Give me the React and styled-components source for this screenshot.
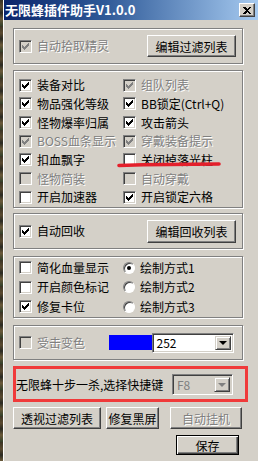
import React from 'react';
import styled, {createGlobalStyle, css} from 'styled-components';

const GlobalStyle = createGlobalStyle`
  html, body {
    margin: 0;
    padding: 0;
    width: 258px;
    height: 461px;
    overflow: hidden;
    background: repeating-linear-gradient(180deg, #3b3424 0px, #5a4a30 7px, #2a2a22 13px, #6b5a3a 19px, #33402a 26px);
    font-family: "Noto Sans CJK SC", "Noto Sans", sans-serif;
    font-size: 12px;
  }
`;

const Window = styled.div`
  margin-left: 3px;
  border-left: 1px solid #fff;
  height: 461px;
  background: #d4d0c8;
  color: #000;
`;

const TitleBar = styled.div`
  height: 20px;
  display: flex;
  align-items: center;
  justify-content: space-between;
  padding: 0 3px 0 1px;
  background: linear-gradient(90deg, #0a246a 0%, #2f5a98 40%, #a6caf0 100%);
`;

const Title = styled.span`
  color: #fff;
  font-weight: 700;
  font-size: 13px;
  line-height: 20px;
`;

const CloseButton = styled.span`
  width: 16px;
  height: 14px;
  box-sizing: border-box;
  display: flex;
  align-items: center;
  justify-content: center;
  background: #d4d0c8;
  border: 1px solid;
  border-color: #fff #404040 #404040 #fff;
  box-shadow: inset -1px -1px 0 #808080;
`;

const Body = styled.div`
  padding-left: 9px;
`;

const Group = styled.div`
  position: relative;
  box-sizing: border-box;
  width: 230px;
  height: ${p => p.$h}px;
  margin-top: ${p => p.$mt}px;
  border: 1px solid #808080;
  box-shadow: inset 1px 1px 0 #fff, 1px 1px 0 #fff;
  padding: ${p => p.$pad || '0 6px 0 5px'};
  display: flex;
  align-items: center;
  justify-content: space-between;
`;

const Grid = styled.div`
  display: grid;
  grid-template-columns: 104px 1fr;
  grid-auto-rows: ${p => p.$row}px;
  align-self: flex-start;
  width: 100%;
`;

const Item = styled.label`
  display: flex;
  align-items: center;
  gap: 5px;
  white-space: nowrap;
  line-height: 14px;
`;

const Text = styled.span`
  ${p =>
    p.$disabled &&
    css`
      color: #808080;
      text-shadow: 1px 1px 0 #fff;
    `}
`;

const Box = styled.span`
  flex: none;
  width: 13px;
  height: 13px;
  box-sizing: border-box;
  border: 1px solid;
  border-color: #808080 #fff #fff #808080;
  box-shadow: inset 1px 1px 0 #404040, inset -1px -1px 0 #d4d0c8;
  background: ${p => (p.$disabled ? '#d4d0c8' : '#fff')};
  svg {
    display: block;
    margin: 2px;
  }
`;

const Radio = styled.span`
  flex: none;
  position: relative;
  width: 12px;
  height: 12px;
  box-sizing: border-box;
  border-radius: 50%;
  border: 1px solid;
  border-color: #808080 #fff #fff #808080;
  box-shadow: inset 1px 1px 0 #404040;
  background: #fff;
  ${p =>
    p.$on &&
    css`
      &::after {
        content: '';
        position: absolute;
        left: 3px;
        top: 3px;
        width: 4px;
        height: 4px;
        border-radius: 50%;
        background: #000;
      }
    `}
`;

const Button = styled.button`
  box-sizing: border-box;
  width: ${p => p.$w}px;
  height: ${p => p.$h || 22}px;
  padding: 0;
  margin: 0 0 0 ${p => p.$ml || 0}px;
  font: inherit;
  font-size: 12px;
  background: #d4d0c8;
  color: #000;
  border: 1px solid;
  border-color: #fff #404040 #404040 #fff;
  box-shadow: inset -1px -1px 0 #808080;
  ${p =>
    p.$default &&
    css`
      border: 1px solid #000;
      box-shadow: inset 1px 1px 0 #fff, inset -1px -1px 0 #404040, inset -2px -2px 0 #808080;
    `}
  ${p =>
    p.disabled &&
    css`
      color: #808080;
      text-shadow: 1px 1px 0 #fff;
    `}
`;

const Swatch = styled.span`
  width: 45px;
  height: 15px;
  background: #0000ff;
  margin-left: 24px;
`;

const Combo = styled.div`
  box-sizing: border-box;
  width: ${p => p.$w}px;
  height: ${p => p.$h}px;
  display: flex;
  align-items: stretch;
  border: 1px solid;
  border-color: #808080 #fff #fff #808080;
  box-shadow: inset 1px 1px 0 #404040, inset -1px -1px 0 #d4d0c8;
  padding: 2px;
  background: ${p => (p.$disabled ? '#d4d0c8' : '#fff')};
  margin-left: auto;
`;

const ComboValue = styled.span`
  flex: 1;
  padding-left: 2px;
  line-height: ${p => p.$lh}px;
  color: ${p => (p.$disabled ? '#808080' : '#000')};
`;

const DropButton = styled.span`
  width: 16px;
  box-sizing: border-box;
  display: flex;
  align-items: center;
  justify-content: center;
  background: #d4d0c8;
  border: 1px solid;
  border-color: #d4d0c8 #404040 #404040 #d4d0c8;
  box-shadow: inset 1px 1px 0 #fff, inset -1px -1px 0 #808080;
  &::after {
    content: '';
    border-left: 4px solid transparent;
    border-right: 4px solid transparent;
    border-top: 4px solid ${p => (p.$disabled ? '#808080' : '#000')};
    margin-top: 1px;
  }
`;

const Highlight = styled.div`
  box-sizing: border-box;
  width: 235px;
  height: 36px;
  margin-top: 6px;
  border: 3px solid #f03a3a;
  display: flex;
  align-items: center;
  padding-right: 12px;
`;

const ButtonRow = styled.div`
  display: flex;
  gap: 5px;
  margin-top: 5px;
`;

const SaveRow = styled.div`
  display: flex;
  justify-content: flex-end;
  margin-top: 6px;
  width: 226px;
`;

const Underline = styled.svg`
  position: absolute;
  left: 102px;
  top: 88px;
  overflow: visible;
`;

const CheckMark = ({disabled}) => (
  <svg width="7" height="7" viewBox="0 0 7 7" shapeRendering="crispEdges">
    <path
      fill={disabled ? '#808080' : '#000'}
      d="M6 0h1v1h-1z M5 1h2v1h-2z M0 2h1v1h-1z M4 2h3v1h-3z M0 3h2v1h-2z M3 3h3v1h-3z M0 4h5v1h-5z M1 5h3v1h-3z M2 6h1v1h-1z"
    />
  </svg>
);

const Check = ({label, checked, disabled}) => (
  <Item>
    <Box $disabled={disabled}>{checked && <CheckMark disabled={disabled} />}</Box>
    <Text $disabled={disabled}>{label}</Text>
  </Item>
);

const RadioItem = ({label, on}) => (
  <Item>
    <Radio $on={on} />
    <Text>{label}</Text>
  </Item>
);

const mainOptions = [
  ['装备对比', true, false],
  ['组队列表', true, true],
  ['物品强化等级', true, false],
  ['BB锁定(Ctrl+Q)', true, false],
  ['怪物爆率归属', true, false],
  ['攻击箭头', true, false],
  ['BOSS血条显示', true, true],
  ['穿戴装备提示', true, true],
  ['扣血飘字', true, false],
  ['关闭掉落光柱', false, false],
  ['怪物简装', false, true],
  ['自动穿戴', false, true],
  ['开启加速器', false, false],
  ['开启锁定六格', true, false],
];

export default function App() {
  return (
    <>
      <GlobalStyle />
      <Window>
        <TitleBar>
          <Title>无限蜂插件助手V1.0.0</Title>
          <CloseButton>
            <svg width="8" height="7" viewBox="0 0 8 7" shapeRendering="crispEdges">
              <path d="M0 0h2l2 2l2-2h2l-3 3.5l3 3.5h-2l-2-2l-2 2h-2l3-3.5z" fill="#000" />
            </svg>
          </CloseButton>
        </TitleBar>
        <Body>
          <Group $h={36} $mt={8}>
            <Check label="自动拾取精灵" checked disabled />
            <Button $w={89}>编辑过滤列表</Button>
          </Group>

          <Group $h={138} $mt={6} $pad="5px 6px 0 5px">
            <Grid $row={18.67}>
              {mainOptions.map(([label, checked, disabled]) => (
                <Check key={label} label={label} checked={checked} disabled={disabled} />
              ))}
            </Grid>
            <Underline width="106" height="8">
              <path d="M3 6.5 C 35 5.5, 75 5, 103 5" stroke="#e41f2b" strokeWidth="3.6" strokeLinecap="round" fill="none" />
            </Underline>
          </Group>

          <Group $h={36} $mt={5}>
            <Check label="自动回收" checked />
            <Button $w={89} $h={23}>编辑回收列表</Button>
          </Group>

          <Group $h={62} $mt={7} $pad="1px 6px 0 5px">
            <Grid $row={19.5}>
              <Check label="简化血量显示" />
              <RadioItem label="绘制方式1" on />
              <Check label="开启颜色标记" />
              <RadioItem label="绘制方式2" />
              <Check label="修复卡位" checked />
              <RadioItem label="绘制方式3" />
            </Grid>
          </Group>

          <Group $h={35} $mt={7} $pad="0 8px 0 5px">
            <Check label="受击变色" disabled />
            <Swatch />
            <Combo $w={87} $h={20}>
              <ComboValue $lh={14}>252</ComboValue>
              <DropButton />
            </Combo>
          </Group>

          <Highlight>
            <span>无限蜂十步一杀,选择快捷键</span>
            <Combo $w={61} $h={21} $disabled>
              <ComboValue $lh={15} $disabled>F8</ComboValue>
              <DropButton $disabled />
            </Combo>
          </Highlight>

          <ButtonRow>
            <Button $w={88}>透视过滤列表</Button>
            <Button $w={53}>修复黑屏</Button>
            <Button $w={72} $ml={6} disabled>自动挂机</Button>
          </ButtonRow>

          <SaveRow>
            <Button $w={63} $h={20} $default>保存</Button>
          </SaveRow>
        </Body>
      </Window>
    </>
  );
}
